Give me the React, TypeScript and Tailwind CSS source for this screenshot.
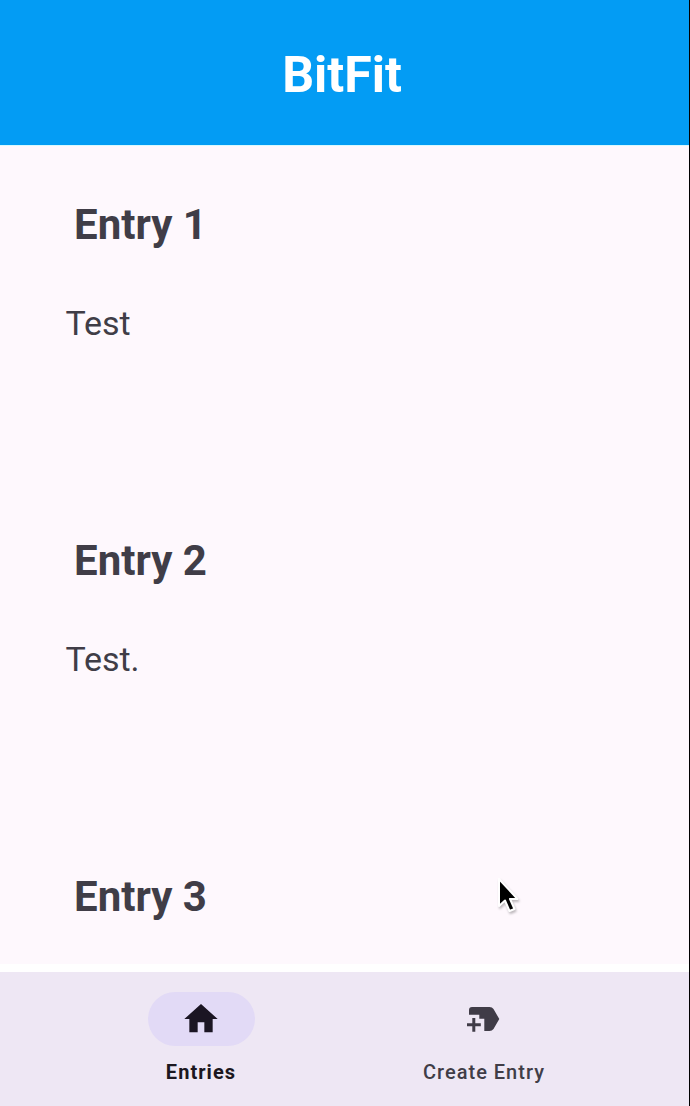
const entries = [
  { title: "Entry 1", text: "Test" },
  { title: "Entry 2", text: "Test." },
  { title: "Entry 3", text: "" },
];

function HomeIcon() {
  return (
    <svg viewBox="0 0 24 24" className="h-10 w-10" fill="#1b1523">
      <path d="M10 20v-6h4v6h5v-8h3L12 3 2 12h3v8z" />
    </svg>
  );
}

function CreateIcon() {
  return (
    <svg viewBox="0 0 40 40" className="h-10 w-10" fill="#403c47">
      <path d="M8 8Q5 8 5 11V15.7H15.3V19.7H20.3V32H25.5Q28 32 29.5 30L35.3 20L29.5 10Q28.2 8 25.5 8Z" />
      <path d="M8.3 19h3v5.3h5.5v3h-5.5v5.5h-3v-5.5H3v-3h5.3z" />
    </svg>
  );
}

export default function App() {
  return (
    <div className="relative flex h-[1106px] w-[690px] flex-col overflow-hidden border-r border-black bg-white font-['Roboto',sans-serif] text-[#403d47]">
      <header className="flex h-[145px] shrink-0 items-center justify-center bg-[#039cf4] pr-[5px] pt-[5px]">
        <h1 className="text-[50px] leading-[60px] font-bold text-white">BitFit</h1>
      </header>
      <main className="h-[819px] shrink-0 overflow-hidden border-t border-[#d9faff] bg-[#fef8fd]">
        {entries.map((entry) => (
          <article key={entry.title} className="h-[336px] pt-[54px]">
            <h2 className="pl-[74px] text-[42px] leading-[50px] font-bold">{entry.title}</h2>
            <p className="mt-[53px] pl-[65.5px] text-[34px] leading-[40px] tracking-[-0.1px]">{entry.text}</p>
          </article>
        ))}
      </main>
      <nav className="mt-2 flex h-[134px] shrink-0 bg-[#eee7f4] pr-[3px] pl-[60px] text-[20px] leading-6">
        <div className="flex w-[282px] flex-col items-center pt-5">
          <div className="flex h-[54px] w-[107px] items-center justify-center rounded-full bg-[#e2daf6] pr-px">
            <HomeIcon />
          </div>
          <span className="mt-[14px] font-bold tracking-[1.05px] text-[#1b1720]">Entries</span>
        </div>
        <div className="flex w-[284px] flex-col items-center pt-5">
          <div className="flex h-[54px] w-[107px] items-center justify-center">
            <CreateIcon />
          </div>
          <span className="mt-[14px] font-medium tracking-[1px]">Create Entry</span>
        </div>
      </nav>
      <svg
        viewBox="0 0 30 42"
        className="absolute top-[873px] left-[493px] h-[42px] w-[30px] drop-shadow-[1px_2px_1px_rgba(0,0,0,0.25)]"
      >
        <path
          d="M6 6V33L12 27.5L16.5 38L21.5 36L17 26H24.5Z"
          fill="#000"
          stroke="#fff"
          strokeWidth="2"
          strokeLinejoin="round"
        />
      </svg>
    </div>
  );
}
